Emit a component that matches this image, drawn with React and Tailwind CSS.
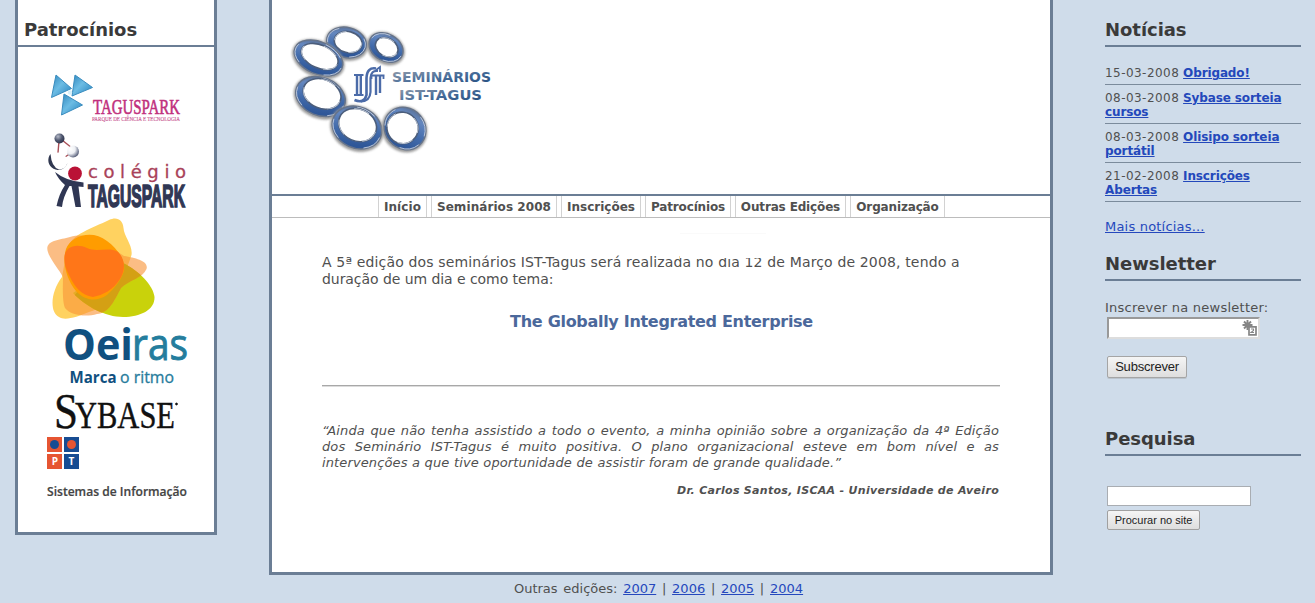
import React from 'react';

const verdana = "font-['DejaVu_Sans',sans-serif]";

function TagusparkLogo() {
  return (
    <svg className="block overflow-visible" width="142" height="62" viewBox="0 0 142 62">
      <defs>
        <linearGradient id="tri" x1="0" y1="0" x2="1" y2="1">
          <stop offset="0" stopColor="#2f86bd" />
          <stop offset="0.45" stopColor="#6cbce4" />
          <stop offset="1" stopColor="#2380bd" />
        </linearGradient>
      </defs>
      <g fill="url(#tri)" stroke="#3b8dbf" strokeWidth="1" strokeLinejoin="round">
        <path d="M9 8 L24.500 21.500 L4.500 30.500 Z" />
        <path d="M28 8 L45.500 20.500 L25 29 Z" />
        <path d="M17 27 L35.500 38 L14.500 48 Z" />
      </g>
      <circle cx="23" cy="25.500" r="2.200" fill="#d7f0fb" />
      <text x="46" y="47" fontSize="21.500" fontFamily="Liberation Serif, serif" fill="#c0307d" stroke="#c0307d" strokeWidth="0.6" textLength="87" lengthAdjust="spacingAndGlyphs">TAGUSPARK</text>
      <text x="45" y="53.500" fontSize="5.200" fontFamily="Liberation Serif, serif" fill="#cb6096" stroke="#cb6096" strokeWidth="0.150" textLength="88" lengthAdjust="spacingAndGlyphs">PARQUE DE CIÊNCIA E TECNOLOGIA</text>
    </svg>
  );
}

function ColegioLogo() {
  return (
    <svg className="block overflow-visible" width="142" height="80" viewBox="0 0 142 80">
      <defs>
        <radialGradient id="ball" cx="0.3" cy="0.3" r="0.85">
          <stop offset="0" stopColor="#fff" />
          <stop offset="0.45" stopColor="#eef0f4" />
          <stop offset="0.8" stopColor="#747b92" />
          <stop offset="1" stopColor="#303850" />
        </radialGradient>
        <radialGradient id="dark" cx="0.35" cy="0.3" r="0.8">
          <stop offset="0" stopColor="#b5bac8" />
          <stop offset="0.5" stopColor="#505870" />
          <stop offset="1" stopColor="#252b43" />
        </radialGradient>
      </defs>
      <path d="M12 12 L10.800 26 M15 11 L25 19 M24 24 L18 28" stroke="#a84e56" strokeWidth="1.400" />
      <circle cx="12.500" cy="9.500" r="5" fill="url(#dark)" />
      <circle cx="26" cy="22.500" r="6" fill="url(#ball)" />
      <circle cx="11" cy="33" r="9.500" fill="#fff" />
      <path d="M3.500 25 A9.800 9.800 0 1 0 20.500 34 Q18 40.500 12 40.500 Q4.500 38 3.500 25" fill="#303850" />
      <path d="M8 43 Q19 52 36.500 53.500 V58 L31.500 57.500 L34 78 H28.500 L24.500 57 H22.500 Q16 68 15 78 L9.500 77 Q12 65 18 56 Q11 50 8 43" fill="#303754" />
      <circle cx="28" cy="44.500" r="6.900" fill="#ba1236" />
      <text x="41" y="48.500" fontSize="18" fontFamily="DejaVu Sans, sans-serif" fill="#a94259" stroke="#a94259" strokeWidth="0.3" textLength="98" lengthAdjust="spacing">colégio</text>
      <text x="41" y="77.500" fontSize="31" fontWeight="700" fontFamily="Liberation Sans, sans-serif" fill="#303754" stroke="#303754" strokeWidth="1.700" textLength="97" lengthAdjust="spacingAndGlyphs">TAGUSPARK</text>
    </svg>
  );
}

function OeirasLogo() {
  return (
    <svg className="block overflow-visible" width="146" height="178" viewBox="0 0 146 178">
      <defs>
        <clipPath id="leaf">
          <path d="M76 54 C92 62 106 76 107.500 88 C108 101 93 108 76 108 C58 108 38 97 26 84 L60 60Z" />
        </clipPath>
      </defs>
      <path d="M62 11 C70 7 76 11 76.500 19 C77 28 86 36 84.500 46 C78 66 64 98 42 103 C30 108 18 112 12 108 C2 103 4 82 15 68 L20 40 C24 25 46 19 62 11Z" fill="#ffd260" />
      <path d="M76 54 C92 62 106 76 107.500 88 C108 101 93 108 76 108 C58 108 38 97 26 84 L60 60Z" fill="#c9d20b" />
      <path d="M0.300 40 C0 31 13 31 23 28 C45 22 60 36 77 47 C89 49 102 52 99.500 60 C96 69 82 71 74 79 C67 92 62 104 50 105 C40 108 24 107 18 99 C15 92 16 76 16 68 C11 59 1 48 0.300 40Z" fill="#f99538" fillOpacity="0.62" />
      <path clipPath="url(#leaf)" d="M76 47 C89 49 102 52 99.500 60 C96 69 82 71 74 79 C67 92 62 104 50 105 L20 95 L50 60Z" fill="#d4a014" />
      <path d="M19 40 C24 27 45 20 60 32 C71 40 79 52 77 62 C73 74 66 80 60 86 C50 93 38 92 29 82 C19 70 15 52 19 40Z" fill="#ff9c00" />
      <path d="M17.500 48 C18 37 30 34 40 39 C50 44 62 37 71 43 C78 50 79 60 73 70 C66 81 56 86 46 88 C34 86 28 78 23 68 C20 62 17 56 17.500 48Z" fill="#ff7618" />
      <text x="16" y="151" fontSize="43" fontWeight="700" fontFamily="Open Sans, sans-serif" fill="#105080" textLength="70" lengthAdjust="spacingAndGlyphs">Oei</text>
      <text x="85" y="151" fontSize="43" fontFamily="Open Sans, sans-serif" fill="#247d9d" stroke="#247d9d" strokeWidth="0.9" textLength="56" lengthAdjust="spacingAndGlyphs">ras</text>
      <text x="22.500" y="173.500" fontSize="15.500" fontWeight="700" fontFamily="Open Sans, sans-serif" fill="#105080" textLength="47" lengthAdjust="spacingAndGlyphs">Marca</text>
      <text x="73" y="173.500" fontSize="15.500" fontFamily="Open Sans, sans-serif" fill="#277c9c" stroke="#277c9c" strokeWidth="0.3" textLength="54" lengthAdjust="spacingAndGlyphs">o ritmo</text>
    </svg>
  );
}

function SybaseLogo() {
  return (
    <svg className="block overflow-visible" width="142" height="48" viewBox="0 0 142 48" fontFamily="Liberation Serif, serif" fill="#111" stroke="#111">
      <text x="7" y="41" fontSize="51" strokeWidth="0.4" textLength="24" lengthAdjust="spacingAndGlyphs">S</text>
      <text x="28" y="41" fontSize="38" strokeWidth="0.4" textLength="100" lengthAdjust="spacingAndGlyphs">YBASE</text>
      <circle cx="129.500" cy="17" r="0.900" />
    </svg>
  );
}

function PtLogo() {
  return (
    <svg className="block" width="142" height="66" viewBox="0 -2 142 66">
      <path fill="#e65532" d="M0 0h15v15H0zM0 17h15v15H0z" />
      <path fill="#174c92" d="M17 0h15v15H17zM17 17h15v15H17z" />
      <circle cx="7.500" cy="7.500" r="4.500" fill="#174c92" />
      <circle cx="24.500" cy="7.500" r="4.500" fill="#e65532" />
      <g fontSize="10" fontWeight="700" fontFamily="Open Sans, sans-serif" fill="#fff" textAnchor="middle">
        <text x="7.800" y="28">P</text>
        <text x="24.500" y="28">T</text>
      </g>
      <text x="0" y="59" fontSize="12.500" fontWeight="600" fontFamily="Open Sans, sans-serif" fill="#444" stroke="#444" strokeWidth="0.200" textLength="140" lengthAdjust="spacingAndGlyphs">Sistemas de Informação</text>
    </svg>
  );
}

const rings = [
  { x: 386, y: 47.5, rx: 18, ry: 13.5, r: 30, dx: 0.5, dy: -0.5 },
  { x: 346.5, y: 42.5, rx: 20, ry: 15, r: 14, dx: 1.5, dy: -0.8 },
  { x: 318.5, y: 58, rx: 25.5, ry: 16, r: 24, dx: 0.5, dy: -1.8 },
  { x: 320.5, y: 96.5, rx: 25.5, ry: 19, r: 22, dx: 0.5, dy: -3 },
  { x: 357, y: 127.5, rx: 25.5, ry: 20.5, r: 24, dx: -0.5, dy: -2.5 },
  { x: 405, y: 128.5, rx: 22, ry: 20, r: 50, dx: -2, dy: 1.5 },
];

function SeminarLogo() {
  return (
    <svg className="block" width="205" height="134" viewBox="290 22 205 134">
      <defs>
        <linearGradient id="steel" x1="0" y1="0" x2="0.4" y2="1">
          <stop offset="0" stopColor="#56637a" />
          <stop offset="0.3" stopColor="#6487bf" />
          <stop offset="0.65" stopColor="#426bab" />
          <stop offset="1" stopColor="#2f5798" />
        </linearGradient>
        <linearGradient id="letters" x1="0" y1="0" x2="1" y2="1">
          <stop offset="0" stopColor="#9aa1ad" />
          <stop offset="0.55" stopColor="#456b99" />
          <stop offset="1" stopColor="#234c7d" />
        </linearGradient>
        <filter id="soft" x="-20%" y="-20%" width="140%" height="140%">
          <feGaussianBlur stdDeviation="1" />
        </filter>
      </defs>
      {rings.map((o) => (
        <g key={o.x} transform={`translate(${o.x} ${o.y}) rotate(${o.r})`}>
          <ellipse cx="0.300" cy="1" rx={o.rx} ry={o.ry} fill="none" stroke="#999" strokeWidth="4" filter="url(#soft)" />
          <ellipse rx={o.rx} ry={o.ry} fill="url(#steel)" stroke="#66748b" strokeWidth="1.500" />
          <ellipse rx={o.rx - 0.8} ry={o.ry - 0.8} fill="none" stroke="#c3cfe2" strokeWidth="0.800" strokeDasharray="20 28" />
          <ellipse cx={o.dx} cy={o.dy} rx={o.rx - 6} ry={o.ry - 4.5} fill="#fff" stroke="#4c5e7b" strokeWidth="1.600" />
          <ellipse cx={o.dx} cy={o.dy} rx={o.rx - 6.3} ry={o.ry - 4.8} fill="none" stroke="#c1cad8" strokeWidth="0.900" strokeDasharray="16 20" />
        </g>
      ))}
      <g fill="none" stroke="#4b6ba8">
        <path d="M354 75 h9.500 M354 95 h9.500" strokeWidth="1.800" />
        <path d="M357 75 V95 M360.800 75 V95" strokeWidth="2.400" />
        <path d="M354.500 100 Q364 104 366.500 95 V78 Q367 67 376 68.500" strokeWidth="2.600" />
        <path d="M361 101.500 Q370 101 370.500 92 V78 Q371 70 378 71" strokeWidth="2.200" />
        <path d="M371 75.500 h13.500 M371.500 75 v4 M383.500 75 v4 M376 70 l4 -3 v5" strokeWidth="1.800" />
        <path d="M376 75 V95 M380 75 V93" strokeWidth="2.400" />
      </g>
      <g fontFamily="DejaVu Sans, sans-serif" fontWeight="700" fontSize="13.500" fill="url(#letters)">
        <text x="392" y="82" textLength="99" lengthAdjust="spacingAndGlyphs">SEMINÁRIOS</text>
        <text x="399" y="99.500" textLength="83" lengthAdjust="spacingAndGlyphs">IST-TAGUS</text>
      </g>
    </svg>
  );
}

function SideHeading({ children, className = '' }) {
  return (
    <h2 className={`h-[47px] border-b-2 border-[#6b7e95] pt-[19px] text-[18px] leading-[22px] font-bold tracking-[-0.05px] text-[#3a3a3a] ${className}`}>
      {children}
    </h2>
  );
}

const nav = [
  ['Início', 'w-[49px] tracking-[0.1px]'],
  ['Seminários 2008', 'w-[126px] tracking-[0.07px]'],
  ['Inscrições', 'w-[80px]'],
  ['Patrocínios', 'w-[86px] tracking-[-0.15px]'],
  ['Outras Edições', 'w-[111px] tracking-[-0.15px]'],
  ['Organização', 'w-[95px] tracking-[-0.15px]'],
];

const news = [
  ['15-03-2008', ['Obrigado!']],
  ['08-03-2008', ['Sybase sorteia', 'cursos']],
  ['08-03-2008', ['Olisipo sorteia', 'portátil']],
  ['21-02-2008', ['Inscrições', 'Abertas']],
];

export default function App() {
  return (
    <div className={`flex h-[603px] w-[1315px] items-start overflow-hidden bg-[#cfdcea] text-[#505050] ${verdana}`}>
      <aside className="ml-[15px] h-[535px] w-[202px] shrink-0 border-x-[3px] border-b-[3px] border-[#6b7e95] bg-white">
        <SideHeading className="pl-[6px]">Patrocínios</SideHeading>
        <div className="ml-[29px] flex flex-col pt-[20px]">
          <TagusparkLogo />
          <ColegioLogo />
          <OeirasLogo />
          <SybaseLogo />
          <PtLogo />
        </div>
      </aside>

      <div className="ml-[52px] w-[784px] shrink-0">
        <main className="h-[575px] border-x-[3px] border-b-[3px] border-[#6b7e95] bg-white">
          <header className="h-[194px] pt-[22px] pl-[18px]">
            <SeminarLogo />
          </header>
          <nav className="flex h-[24px] gap-[4px] border-t-2 border-b border-t-[#6b7e95] border-b-[#bcbcbc] pl-[106px]">
            {nav.map(([label, width]) => (
              <a key={label} className={`${width} box-border border-x border-[#d2d2d2] pt-px text-center text-[12px] leading-[20px] font-bold whitespace-nowrap text-[#505050]`}>
                {label}
              </a>
            ))}
          </nav>
          <section className="pt-[36px] pr-[51px] pl-[50px]">
            <div className="relative">
              <p className="text-[14px] leading-[17px] whitespace-nowrap">
                <span className="tracking-[0.15px]">A 5ª edição dos seminários IST-Tagus será realizada no dia 12 de Março de 2008, tendo a</span><br />
                <span className="tracking-[-0.06px]">duração de um dia e como tema:</span>
              </p>
              <div className="absolute -top-[21px] left-[358px] h-[25px] w-[86px] border-t border-[#fafafa] bg-white" />
            </div>
            <h1 className="mt-[24px] pl-[2px] text-center text-[16px] leading-[20px] font-bold tracking-[-0.3px] whitespace-nowrap text-[#4b689b]">
              The Globally Integrated Enterprise
            </h1>
            <hr className="mt-[53px] -mr-px h-[2px] border-t border-b border-t-[#a8a8a8] border-b-[#dcdcdc]" />
            <blockquote className="mt-[36px] text-[13px] leading-[16px] tracking-[0.12px] whitespace-nowrap italic [text-align-last:justify]">
              <span className="block">“Ainda que não tenha assistido a todo o evento, a minha opinião sobre a organização da 4ª Edição</span>
              <span className="block">dos Seminário IST-Tagus é muito positiva. O plano organizacional esteve em bom nível e as</span>
              <span className="block w-[519px]">intervenções a que tive oportunidade de assistir foram de grande qualidade.”</span>
            </blockquote>
            <p className="mt-[12px] text-right text-[11px] leading-[15px] font-bold tracking-[0.3px] italic">
              Dr. Carlos Santos, ISCAA - Universidade de Aveiro
            </p>
          </section>
        </main>
        <footer className="pt-[5px] pr-[5px] text-center text-[13px] leading-[18px] [word-spacing:1.6px] whitespace-pre">
          Outras edições: <a className="text-[#2548bd] underline">2007</a> | <a className="text-[#2548bd] underline">2006</a> | <a className="text-[#2548bd] underline">2005</a> | <a className="text-[#2548bd] underline">2004</a>
        </footer>
      </div>

      <aside className="ml-[52px] w-[196px] shrink-0">
        <SideHeading>Notícias</SideHeading>
        <ul className="pt-[14px] text-[12px] leading-[14px]">
          {news.map(([date, lines]) => (
            <li key={lines[0]} className="border-b border-[#7b8b9c] pt-[6px] pb-[4px] first:pt-[5px]">
              <span className="tracking-[0.45px]">{date}</span>{' '}
              <a className="font-bold tracking-[-0.12px] text-[#2348bb] underline">
                {lines[0]}
                {lines[1] && <><br />{lines[1]}</>}
              </a>
            </li>
          ))}
        </ul>
        <a className="mt-[16px] block text-[13px] leading-[18px] tracking-[0.2px] text-[#2548bd] underline">Mais notícias...</a>
        <SideHeading className="-mt-[2px]">Newsletter</SideHeading>
        <form>
          <label className="block pt-[18px] text-[13px] leading-[18px] tracking-[0.25px] whitespace-nowrap">Inscrever na newsletter:</label>
          <div className="ml-[2px] flex h-[22px] w-[153px] items-center justify-end border-2 border-[#ddd] border-t-[#999] border-l-[#999] bg-white">
            <svg width="16" height="16" viewBox="0 0 16 16" fill="none" stroke="#858585">
              <path d="M5.500 0v10M.5 5h10M2 1.500l7 7M9 1.500l-7 7" strokeWidth="1.900" />
              <path d="M7 6.800h7v8h-7z" fill="#fff" strokeWidth="1.700" />
              <path d="M9 9h2.500v1.500l-2.500 2h3" strokeWidth="1.100" />
            </svg>
          </div>
          <button type="button" className="mt-[17px] ml-[2px] block h-[22px] w-[80px] rounded-[2px] border border-[#a5a5a5] bg-linear-to-b from-[#f5f5f5] to-[#dedede] font-['Liberation_Sans',sans-serif] text-[13px] leading-[20px] tracking-[-0.2px] text-[#222] shadow-[0_1px_0_#bbc4cd]">
            Subscrever
          </button>
        </form>
        <SideHeading className="mt-[31px]">Pesquisa</SideHeading>
        <form className="pt-[30px] pl-[2px]">
          <div className="h-[20px] w-[144px] border border-[#a9adb2] bg-white" />
          <button type="button" className="mt-[4px] block h-[20px] w-[93px] rounded-[2px] border border-[#a0a0a0] bg-linear-to-b from-[#f5f5f5] to-[#dedede] font-['Liberation_Sans',sans-serif] text-[11px] leading-[18px] text-[#222]">
            Procurar no site
          </button>
        </form>
      </aside>
    </div>
  );
}
